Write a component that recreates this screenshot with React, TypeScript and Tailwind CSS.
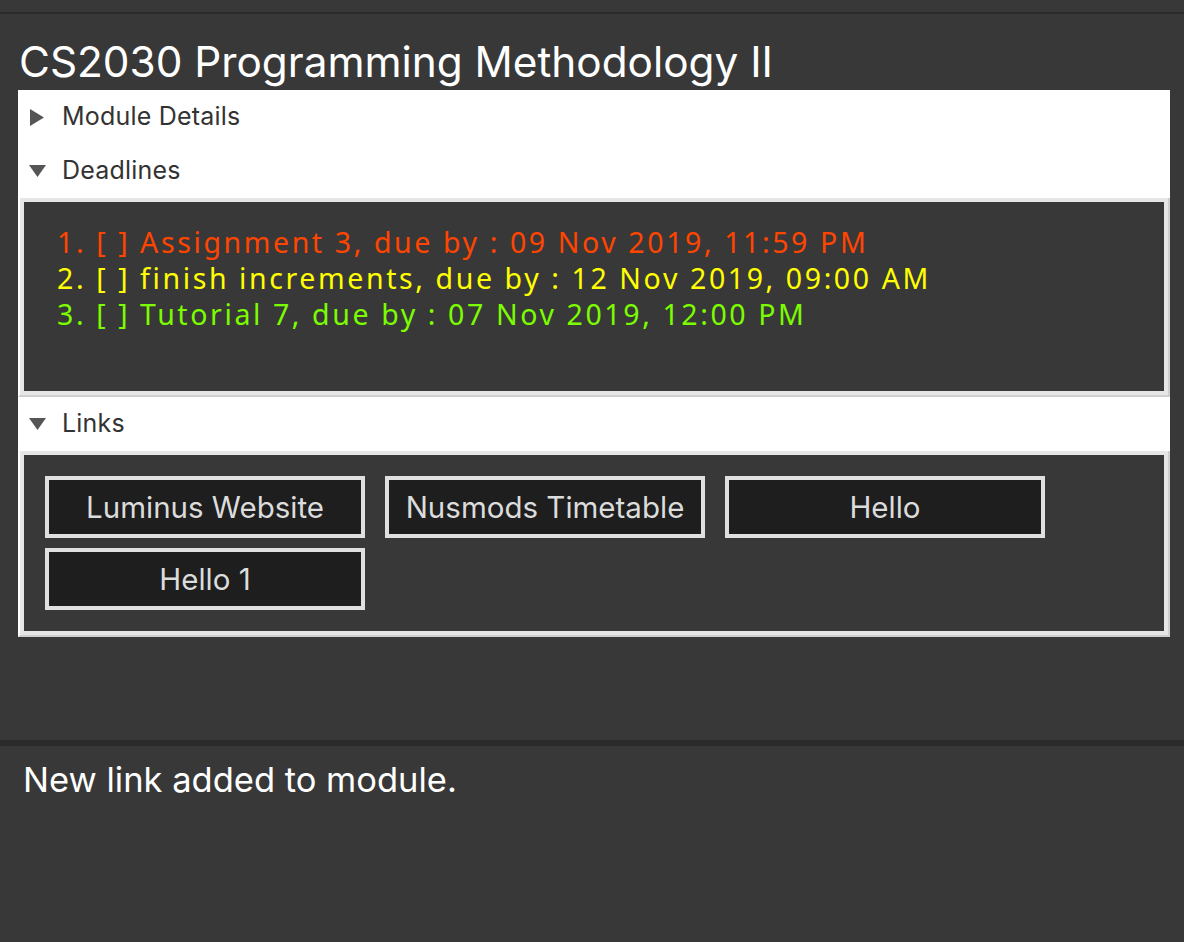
import React from "react";

function Tri({ open }: { open: boolean }) {
  return open ? (
    <svg width="17" height="12" viewBox="0 0 17 12" className="shrink-0">
      <polygon points="0,0 17,0 8.5,12" fill="#555555" />
    </svg>
  ) : (
    <svg width="14" height="17" viewBox="0 0 14 17" className="shrink-0">
      <polygon points="0,0 14,8.5 0,17" fill="#555555" />
    </svg>
  );
}

function Header({ label, open }: { label: string; open: boolean }) {
  return (
    <div className="h-[54px] bg-white flex items-center">
      <div className="w-[44px] flex justify-start pl-[10px]">
        <div className="w-[18px] flex justify-center">
          <Tri open={open} />
        </div>
      </div>
      <span className="text-[25px] tracking-[0.2px] text-[#333333]">{label}</span>
    </div>
  );
}

function Boxed({ children, className }: { children: React.ReactNode; className: string }) {
  return (
    <div className="bg-[#e6e6e6] border-l-2 border-l-white border-r-2 border-r-[#cfcfcf] border-b-2 border-b-[#cfcfcf] pl-[4px] pr-[4px] pt-[4px] pb-[4px]">
      <div className={"bg-[#383838] " + className}>{children}</div>
    </div>
  );
}

const links = ["Luminus Website", "Nusmods Timetable", "Hello", "Hello 1"];

export default function App() {
  return (
    <div className="w-[1184px] h-[942px] bg-[#383838] flex flex-col overflow-hidden font-[Inter,sans-serif]">
      <div className="h-[12px] shrink-0" />
      <div className="h-[2px] bg-[#2a2a2a] shrink-0" />
      <div className="h-[726px] shrink-0 pl-[18px] pr-[14px]">
        <div className="h-[76px] flex items-end pb-[3px]">
          <h1 className="text-[42.3px] leading-[50px] text-white pl-[1px]">CS2030 Programming Methodology II</h1>
        </div>
        <div className="bg-white">
          <Header label="Module Details" open={false} />
          <Header label="Deadlines" open={true} />
          <Boxed className="h-[189px] pt-[22px] pl-[33px] text-[28.5px] leading-[36px] tracking-[2.6px] font-['Noto_Sans',sans-serif]">
            <div className="text-[#ff4500]">1. [ ] Assignment 3, due by : 09 Nov 2019, 11:59 PM</div>
            <div className="text-[#ffff00]">2. [ ] finish increments, due by : 12 Nov 2019, 09:00 AM</div>
            <div className="text-[#7cfc00]">3. [ ] Tutorial 7, due by : 07 Nov 2019, 12:00 PM</div>
          </Boxed>
          <Header label="Links" open={true} />
          <Boxed className="h-[176px] pt-[21px] pl-[21px]">
            <div className="flex flex-wrap gap-x-[20px] gap-y-[10px] w-[1020px]">
              {links.map((l) => (
                <div
                  key={l}
                  className="w-[320px] h-[62px] border-4 border-[#e0e0e0] bg-[#1e1e1e] flex items-center justify-center text-[29.5px] text-[#dcdcdc]"
                >
                  {l}
                </div>
              ))}
            </div>
          </Boxed>
        </div>
      </div>
      <div className="h-[6px] bg-[#2a2a2a] shrink-0" />
      <div className="flex-1 px-[23px] pt-[12px]">
        <div className="text-[34.5px] leading-[44px] text-white">New link added to module.</div>
      </div>
    </div>
  );
}
